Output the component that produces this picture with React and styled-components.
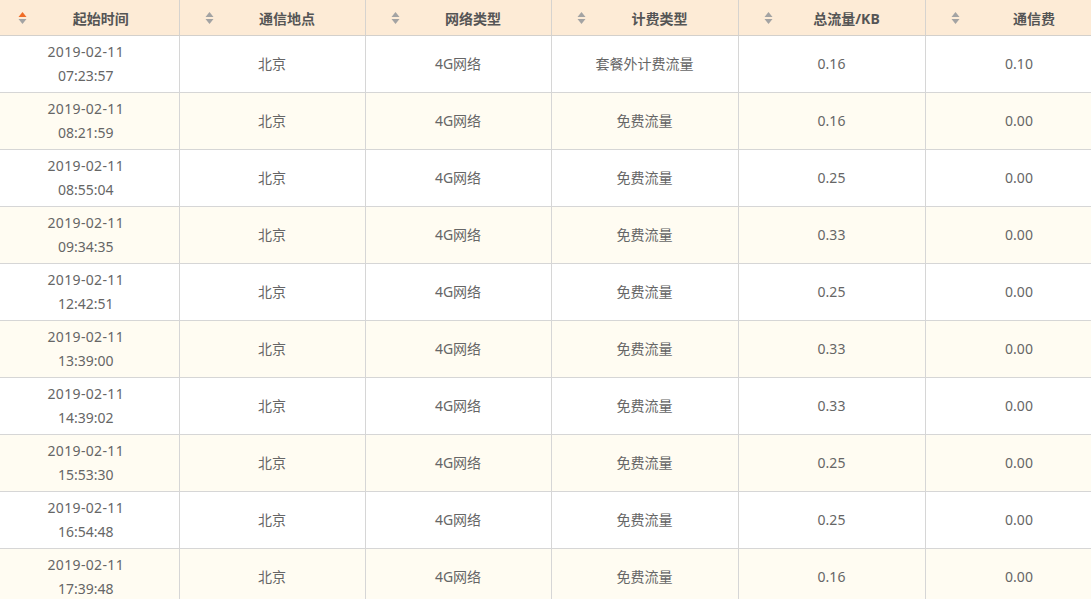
import React from "react";
import styled, { createGlobalStyle } from "styled-components";

const Global = createGlobalStyle`
  html, body { margin: 0; padding: 0; background: #fff; }
  body { font-family: "Noto Sans", "Noto Sans CJK SC", sans-serif; }
`;

const Wrap = styled.div`
  width: 1091px;
  height: 599px;
  overflow: hidden;
`;

const Table = styled.table`
  margin-left: -7px;
  width: 1120px;
  table-layout: fixed;
  border-collapse: collapse;
  font-size: 14px;
`;

const HeadCell = styled.th`
  height: 35px;
  padding: 0;
  background: #fdebd6;
  border-right: 1px solid #d6d3cf;
  border-bottom: 1px solid #d3d0cc;
  color: #555;
  font-weight: bold;
  font-size: 14px;
`;

const HeadInner = styled.div`
  display: flex;
  align-items: center;
  padding: 0 4px 0 25px;
`;

const Label = styled.span`
  flex: 1;
  text-align: center;
`;

const Row = styled.tr`
  background: ${(p) => (p.$alt ? "#fffcf2" : "#ffffff")};
`;

const Cell = styled.td`
  height: 48px;
  padding: 4px 0;
  border-right: 1px solid #d6d6d6;
  border-bottom: 1px solid #d6d6d6;
  color: #666;
  text-align: center;
  line-height: 24px;
`;

const DateLine = styled.span`
  letter-spacing: 0.35px;
`;

const SortIcon = ({ active }) => (
  <svg width="9" height="14" viewBox="0 0 9 14">
    <polygon points="4.5,1 8.5,6 0.5,6" fill={active ? "#f06d27" : "#a3a3a3"} />
    <polygon points="0.5,8 8.5,8 4.5,13" fill="#a3a3a3" />
  </svg>
);

const headers = ["起始时间", "通信地点", "网络类型", "计费类型", "总流量/KB", "通信费"];

const rows = [
  ["07:23:57", "套餐外计费流量", "0.16", "0.10"],
  ["08:21:59", "免费流量", "0.16", "0.00"],
  ["08:55:04", "免费流量", "0.25", "0.00"],
  ["09:34:35", "免费流量", "0.33", "0.00"],
  ["12:42:51", "免费流量", "0.25", "0.00"],
  ["13:39:00", "免费流量", "0.33", "0.00"],
  ["14:39:02", "免费流量", "0.33", "0.00"],
  ["15:53:30", "免费流量", "0.25", "0.00"],
  ["16:54:48", "免费流量", "0.25", "0.00"],
  ["17:39:48", "免费流量", "0.16", "0.00"],
];

const widths = [186, 186, 186, 187, 187, 188];

export default function App() {
  return (
    <Wrap>
      <Global />
      <Table>
        <colgroup>
          {widths.map((w, i) => (
            <col key={i} style={{ width: w }} />
          ))}
        </colgroup>
        <thead>
          <tr>
            {headers.map((h, i) => (
              <HeadCell key={h}>
                <HeadInner>
                  <SortIcon active={i === 0} />
                  <Label>{h}</Label>
                </HeadInner>
              </HeadCell>
            ))}
          </tr>
        </thead>
        <tbody>
          {rows.map((r, i) => (
            <Row key={i} $alt={i % 2 === 1}>
              <Cell>
                <DateLine>2019-02-11</DateLine>
                <br />
                {r[0]}
              </Cell>
              <Cell>北京</Cell>
              <Cell>4G网络</Cell>
              <Cell>{r[1]}</Cell>
              <Cell>{r[2]}</Cell>
              <Cell>{r[3]}</Cell>
            </Row>
          ))}
        </tbody>
      </Table>
    </Wrap>
  );
}
